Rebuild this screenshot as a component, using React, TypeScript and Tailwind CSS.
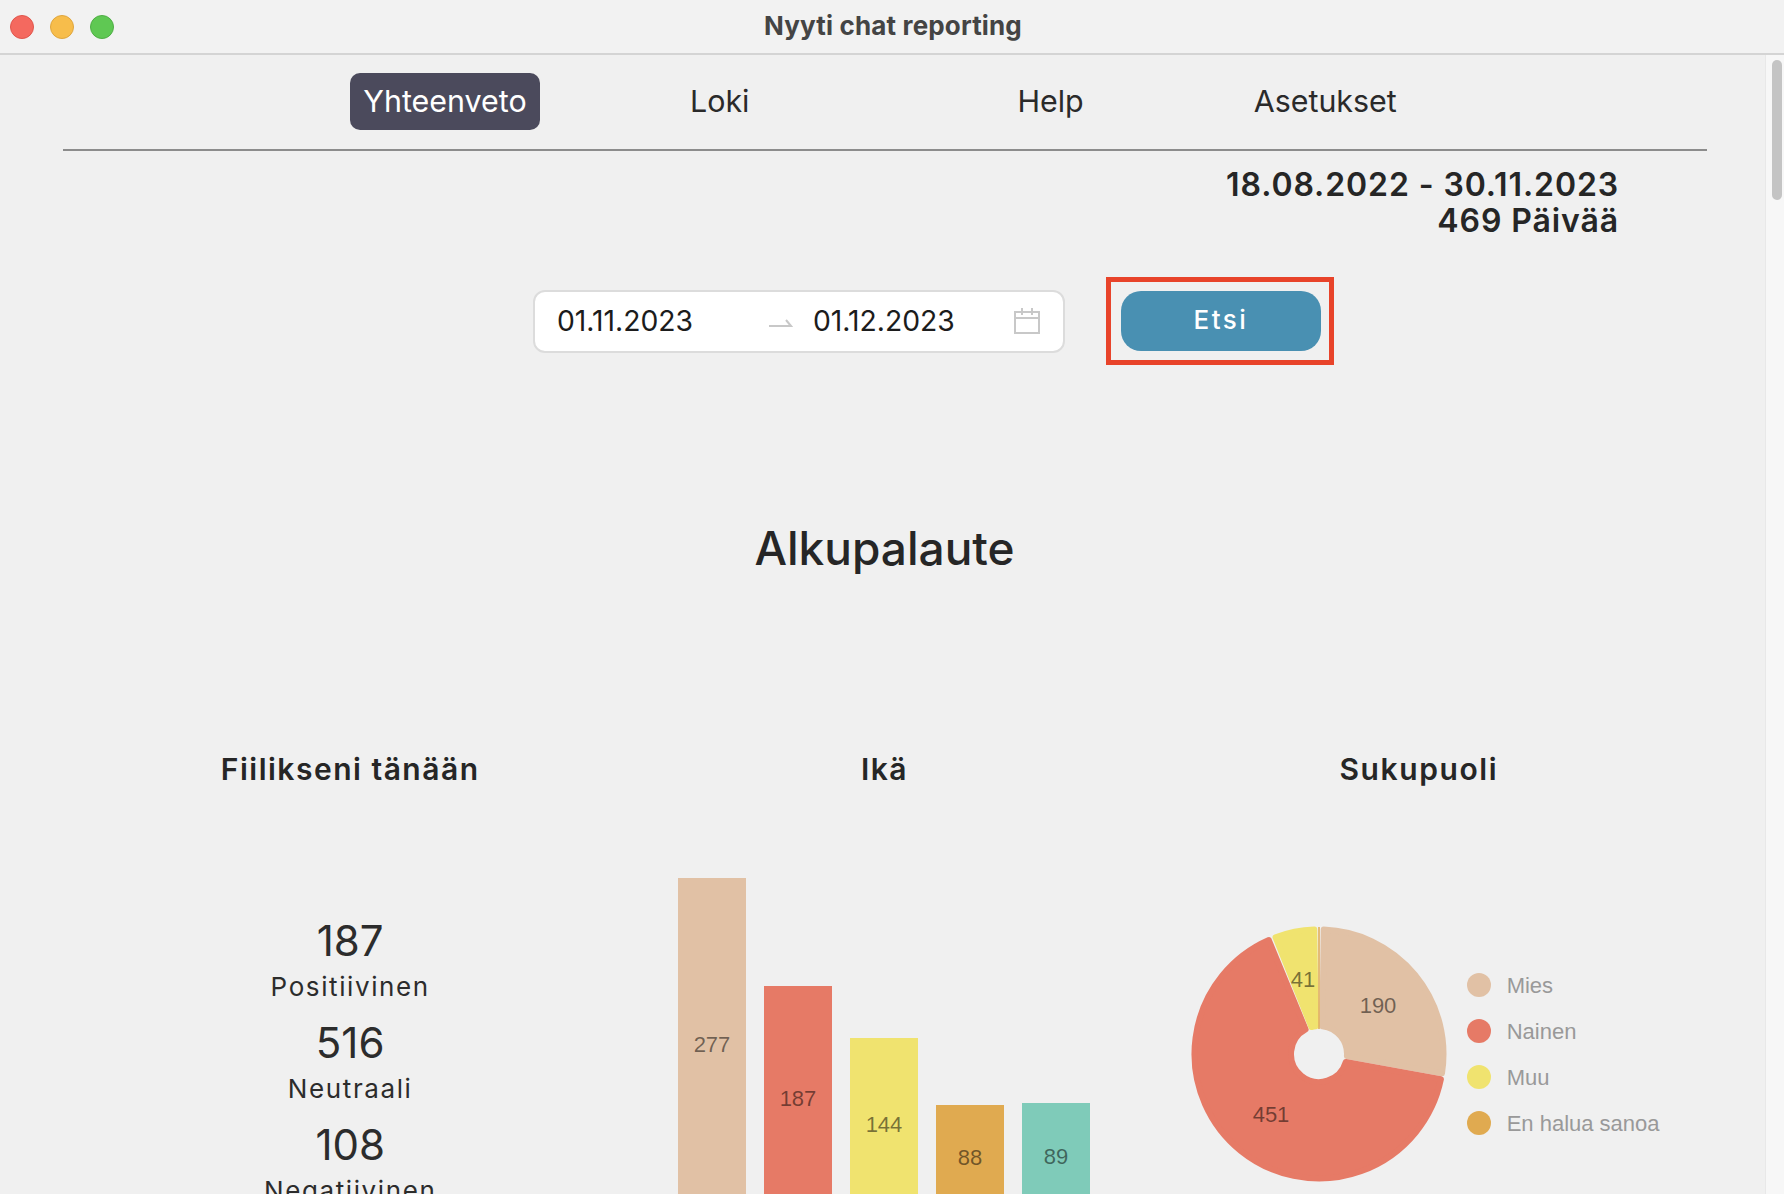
const sans = "font-['Inter','Noto_Sans',sans-serif]";

const bars = [
  { value: 277, height: 'h-[332px]', color: 'bg-[#e1c1a5]' },
  { value: 187, height: 'h-[224px]', color: 'bg-[#e67a66]' },
  { value: 144, height: 'h-[172px]', color: 'bg-[#f0e36f]' },
  { value: 88, height: 'h-[105px]', color: 'bg-[#e0aa50]' },
  { value: 89, height: 'h-[107px]', color: 'bg-[#7fcbb9]' },
];

const stats = [
  { value: 187, label: 'Positiivinen' },
  { value: 516, label: 'Neutraali' },
  { value: 108, label: 'Negatiivinen' },
];

const legend = [
  { label: 'Mies', color: 'bg-[#e1c1a5]' },
  { label: 'Nainen', color: 'bg-[#e67a66]' },
  { label: 'Muu', color: 'bg-[#f0e36f]' },
  { label: 'En halua sanoa', color: 'bg-[#e0aa50]' },
];

// Donut slice, inset by d so a round stroke of 2d gives soft corners
function slicePath(from: number, to: number, outer: number, inner: number, d: number) {
  const cx = 130;
  const cy = 130;
  const point = (deg: number, r: number) => {
    const a = ((deg - 90) * Math.PI) / 180;
    return `${(cx + r * Math.cos(a)).toFixed(2)} ${(cy + r * Math.sin(a)).toFixed(2)}`;
  };
  const off = (r: number) => (Math.asin(d / r) * 180) / Math.PI;
  const large = to - from > 180 ? 1 : 0;
  return [
    `M ${point(from + off(outer), outer)}`,
    `A ${outer} ${outer} 0 ${large} 1 ${point(to - off(outer), outer)}`,
    `L ${point(to - off(inner), inner)}`,
    `A ${inner} ${inner} 0 ${large} 0 ${point(from + off(inner), inner)}`,
    'Z',
  ].join(' ');
}

function PieChart() {
  const slices = [
    { from: 0.8, to: 100.3, color: '#e1c1a5' },
    { from: 100.3, to: 337.6, color: '#e67a66' },
    { from: 338.2, to: 359.2, color: '#f0e36f' },
  ];
  return (
    <svg width="260" height="260" viewBox="0 0 260 260" className="shrink-0">
      {slices.map((s) => (
        <path
          key={s.color}
          d={slicePath(s.from, s.to, 124.5, 28, 3)}
          fill={s.color}
          stroke={s.color}
          strokeWidth="6"
          strokeLinejoin="round"
        />
      ))}
      <line x1="130" y1="3" x2="130" y2="105" stroke="#e0aa50" strokeWidth="1.5" />
      <g fontFamily="'Liberation Sans', sans-serif" fontSize="22" fill="#000" fillOpacity="0.5" textAnchor="middle">
        <text x="189" y="89">190</text>
        <text x="82" y="198">451</text>
        <text x="114" y="63">41</text>
      </g>
    </svg>
  );
}

export default function App() {
  return (
    <div className={`flex h-[1194px] w-[1784px] flex-col overflow-hidden bg-[#f0f0f0] ${sans}`}>
      {/* Title bar */}
      <header className="grid h-[55px] shrink-0 grid-cols-[1fr_auto_1fr] items-center border-b-2 border-[#d4d4d4] bg-[#f2f2f2]">
        <div className="flex gap-4 pl-2.5">
          <span className="h-6 w-6 rounded-full border border-[#e0564c] bg-[#f4695f]" />
          <span className="h-6 w-6 rounded-full border border-[#dfa63e] bg-[#f7bd4b]" />
          <span className="h-6 w-6 rounded-full border border-[#4fae45] bg-[#5fc853]" />
        </div>
        <div className="pb-[2px] pl-[2px] text-[26px] font-bold tracking-[0.15px] text-[#444444]">Nyyti chat reporting</div>
      </header>

      <div className="flex min-h-0 flex-1">
        <main className="min-w-0 flex-1 overflow-hidden">
          {/* Nav */}
          <nav className="ml-[63px] mr-[58px] flex h-[96px] items-center border-b-2 border-[#8c8c8c] pb-[2px] pl-[287px] text-[30.4px] text-[#2a2a2a]">
            <span className="flex h-[57px] w-[190px] items-center justify-center rounded-[10px] bg-[#4b4a5c] pt-[1px] text-white">Yhteenveto</span>
            <span className="ml-[150px] pt-[1px]">Loki</span>
            <span className="ml-[268px] pt-[1px]">Help</span>
            <span className="ml-[170px] pt-[1px]">Asetukset</span>
          </nav>

          {/* Total range */}
          <div className="mr-[146px] mt-[16px] text-right text-[32px] font-semibold leading-[36px] tracking-[0.9px] text-[#262626]">
            <div>18.08.2022 - 30.11.2023</div>
            <div>469 Päivää</div>
          </div>

          {/* Search */}
          <div className="ml-[533px] mt-[38px] flex items-center gap-[41px]">
            <div className="flex h-[63px] w-[532px] items-center rounded-xl border-2 border-[#dcdcdc] bg-white pl-[22px] text-[28.3px] text-[#1c1c1c]">
              <span className="w-[212px]">01.11.2023</span>
              <svg width="24" height="10" viewBox="0 0 24 10" className="mr-[20px] mt-[2px]" fill="none" stroke="#c8c8c8" strokeWidth="2">
                <path d="M0 9h22l-5-6" />
              </svg>
              <span className="w-[201px]">01.12.2023</span>
              <svg width="26" height="26" viewBox="0 0 26 26" fill="none" stroke="#c8c8c8" strokeWidth="2">
                <path d="M1 4h24v21H1zM1 10h24M8 0v7M18 0v7" />
              </svg>
            </div>
            <div className="border-[5px] border-[#e8432a] py-[9px] pl-[10px] pr-[8px]">
              <button className="flex h-[60px] w-[200px] items-center justify-center rounded-[20px] bg-[#4990b2] pb-[3px] text-[26px] font-medium tracking-[2.5px] text-white">
                Etsi
              </button>
            </div>
          </div>

          <h1 className="mt-[155px] pl-[4px] text-center text-[46px] font-medium leading-[56px] text-[#262626]">Alkupalaute</h1>

          {/* Charts */}
          <div className="ml-[83px] mr-[79px] mt-[175px] grid grid-cols-3">
            <section>
              <h2 className="text-center text-[30px] font-semibold leading-9 tracking-[1.5px] text-[#262626]">Fiilikseni tänään</h2>
              <div className="mt-[129px] flex flex-col items-center gap-[15px] text-[#2c2c2c]">
                {stats.map((stat) => (
                  <div key={stat.label} className="text-center">
                    <div className="text-[42px] leading-[50px]">{stat.value}</div>
                    <div className="mt-[5px] text-[26px] leading-[32px] tracking-[1.6px]">{stat.label}</div>
                  </div>
                ))}
              </div>
            </section>

            <section>
              <h2 className="text-center text-[30px] font-semibold leading-9 tracking-[1.5px] text-[#262626]">Ikä</h2>
              <div className="mt-[91px] flex h-[332px] items-end justify-center gap-[18px]">
                {bars.map((bar) => (
                  <div
                    key={bar.value}
                    className={`flex w-[68px] items-center justify-center pr-[1px] font-['Liberation_Sans',sans-serif] text-[22px] text-black/50 ${bar.height} ${bar.color}`}
                  >
                    {bar.value}
                  </div>
                ))}
              </div>
            </section>

            <section>
              <h2 className="text-center text-[30px] font-semibold leading-9 tracking-[1.6px] text-[#262626]">Sukupuoli</h2>
              <div className="ml-[37px] mt-[137px] flex items-center gap-[18px]">
                <PieChart />
                <ul className="font-['Liberation_Sans',sans-serif] text-[22px] text-[#999999]">
                  {legend.map((item) => (
                    <li key={item.label} className="flex h-[46px] items-center gap-4">
                      <span className={`h-6 w-6 rounded-full ${item.color}`} />
                      <span className="whitespace-nowrap">{item.label}</span>
                    </li>
                  ))}
                </ul>
              </div>
            </section>
          </div>
        </main>

        {/* Scrollbar */}
        <div className="w-[19px] shrink-0 border-l border-[#e8e8e8] bg-[#f7f7f7] pl-[6px] pr-[2px] pt-[5px]">
          <div className="h-[140px] rounded-full bg-[#c4c4c4]" />
        </div>
      </div>
    </div>
  );
}
